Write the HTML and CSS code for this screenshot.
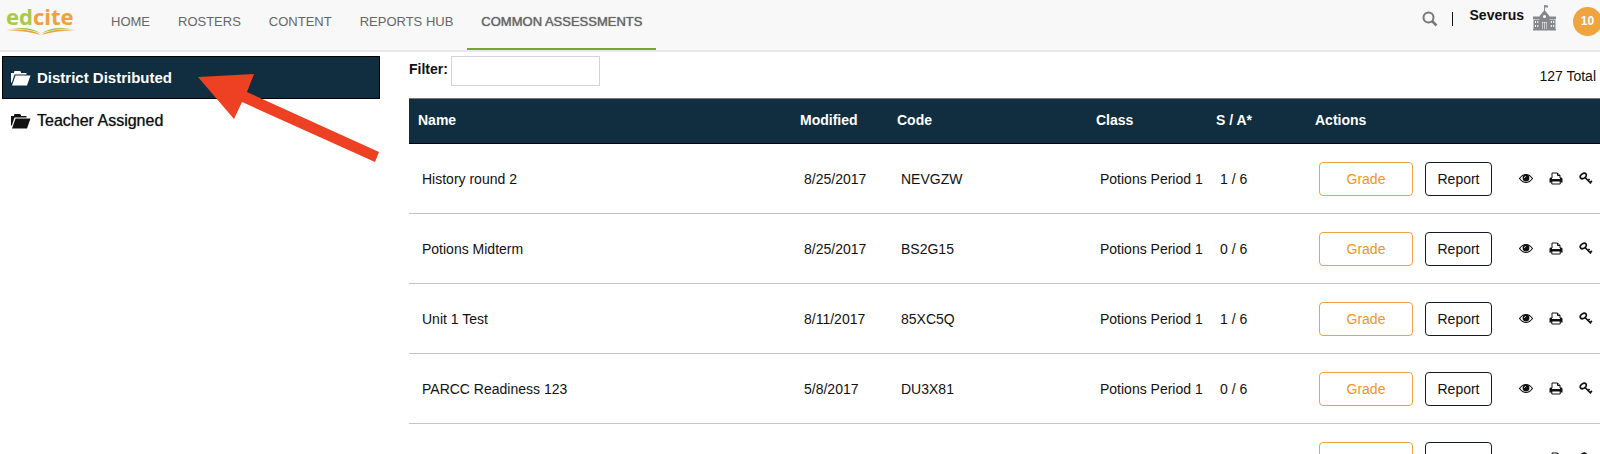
FILE: index.html
```html
<!DOCTYPE html>
<html lang="en">
<head>
  <meta charset="UTF-8">
  <meta name="viewport" content="width=device-width, initial-scale=1">
  <title>Edcite - Common Assessments</title>
  <link rel="stylesheet" href="styles.css">
</head>

<body>
  <!-- shared icons -->
  <svg class="sprite" aria-hidden="true">
    <symbol id="folder" viewBox="0 0 20 16">
      <path d="M0 13V3h3V1.600L4 1h5l1 1v1h5.500v1.500H3.500L1 12z"/>
      <path d="M4.500 5.500h15L16 15.500H1z"/>
    </symbol>
    <symbol id="eye" viewBox="0 0 14 10">
      <path d="M.5 5Q3.500 1 7 1t6.500 4Q10.500 9 7 9T.5 5z" fill="none" stroke="currentColor" stroke-width="1.200"/>
      <circle cx="7" cy="4.500" r="3.400"/>
      <path d="M5.300 4.500Q5.400 2.900 7 2.800" fill="none" stroke="#fff" stroke-width="0.700"/>
    </symbol>
    <symbol id="print" viewBox="0 0 14 13">
      <path d="M3 6V1h5.500L11 3.500V6M8.500 1v2.500H11" fill="none" stroke="currentColor"/>
      <path d="M1.500 5.500H3V7h8V5.500h1.500l1 1V10.500h-13v-4z"/>
      <path d="M2.800 9h8.400v3H2.800z" fill="#fff" stroke="currentColor"/>
    </symbol>
    <symbol id="key" viewBox="0 0 14 13">
      <ellipse cx="4.300" cy="4" rx="3.300" ry="2.300" transform="rotate(-35 4.300 4)" fill="none" stroke="currentColor" stroke-width="1.700"/>
      <path d="M6 5.500l6 6M8.800 8.800l1.800-1.800M10.900 10.900l2-2" fill="none" stroke="currentColor" stroke-width="1.700"/>
    </symbol>
  </svg>

  <header class="navbar">
    <a href="#" class="logo">
      <span class="logo-text">ed<span class="logo-cite">cite</span></span>
      <svg class="logo-book" viewBox="0 0 70 8">
        <path d="M6 1.500Q25-1 35 6.500 25 2 6 1.500z" fill="#9cc044"/>
        <path d="M0 3Q24 1 35 8 22 4 0 3z" fill="#f0a03c"/>
        <path d="M64 1.500Q45-1 35 6.500 45 2 64 1.500z" fill="#9cc044"/>
        <path d="M70 3Q46 1 35 8 48 4 70 3z" fill="#f0a03c"/>
      </svg>
    </a>
    <nav class="menu">
      <a href="#">HOME</a>
      <a href="#">ROSTERS</a>
      <a href="#">CONTENT</a>
      <a href="#">REPORTS HUB</a>
      <a href="#" class="active">COMMON ASSESSMENTS</a>
    </nav>
    <div class="user">
      <button class="search" aria-label="Search">
        <svg viewBox="0 0 16 16" width="16" height="16">
          <circle cx="6.500" cy="6.500" r="5" fill="none" stroke="#777" stroke-width="2"/>
          <path d="M10 10l4.500 4.500" stroke="#777" stroke-width="2.500"/>
        </svg>
      </button>
      <span class="divider"></span>
      <span class="username">Severus</span>
      <svg class="school" viewBox="0 0 23 27" width="23" height="27">
        <path d="M11 8V1h1l3 .6v2H12V8z" fill="#8b8e90"/>
        <path d="M6.500 12l5-6 5 6v13h-10zM0 12.500h6.500v2.500H0zM16.500 12.500H23V15h-6.500zM.5 15.500h6V25h-6zM16.500 15.500h6V25h-6zM0 25h23v1.500H0z" fill="#85888a"/>
        <circle cx="11.500" cy="12.500" r="1.500" fill="#fff"/>
        <path d="M2 17h1v2H2zM4.300 17h1v2h-1zM2 21h1v2H2zM4.300 21h1v2h-1zM17.800 17h1v2h-1zM20.200 17h1v2h-1zM17.800 21h1v2h-1zM20.200 21h1v2h-1zM9 18h5v7H9z" fill="#fff"/>
        <path d="M9.500 18.500h1.700V25H9.500zM11.800 18.500h1.700V25h-1.700z" fill="#85888a"/>
      </svg>
      <span class="badge">10</span>
    </div>
  </header>

  <div class="page">
    <aside class="sidebar">
      <a href="#" class="folder selected"><svg><use href="#folder"/></svg>District Distributed</a>
      <a href="#" class="folder"><svg><use href="#folder"/></svg>Teacher Assigned</a>
      <svg class="arrow" viewBox="0 0 182 88">
        <path d="M0 3l56-3-7 18 132 60-4 10L44 28l-8 17z" fill="#ee4023"/>
      </svg>
    </aside>

    <main class="content">
      <div class="toolbar">
        <label for="filter">Filter:</label>
        <input type="text" id="filter">
        <span class="total">127 Total</span>
      </div>

      <table class="assessments">
        <thead>
          <tr>
            <th>Name</th>
            <th class="col-modified">Modified</th>
            <th class="col-code">Code</th>
            <th class="col-class">Class</th>
            <th class="col-sa">S / A*</th>
            <th class="col-actions">Actions</th>
          </tr>
        </thead>
        <tbody>
          <tr>
            <td>History round 2</td>
            <td>8/25/2017</td>
            <td>NEVGZW</td>
            <td>Potions Period 1</td>
            <td>1 / 6</td>
            <td>
              <div class="actions">
                <button class="btn grade">Grade</button>
                <button class="btn report">Report</button>
                <button class="icon" aria-label="View"><svg><use href="#eye"/></svg></button>
                <button class="icon" aria-label="Print"><svg><use href="#print"/></svg></button>
                <button class="icon" aria-label="Answer key"><svg><use href="#key"/></svg></button>
              </div>
            </td>
          </tr>
          <tr>
            <td>Potions Midterm</td>
            <td>8/25/2017</td>
            <td>BS2G15</td>
            <td>Potions Period 1</td>
            <td>0 / 6</td>
            <td>
              <div class="actions">
                <button class="btn grade">Grade</button>
                <button class="btn report">Report</button>
                <button class="icon" aria-label="View"><svg><use href="#eye"/></svg></button>
                <button class="icon" aria-label="Print"><svg><use href="#print"/></svg></button>
                <button class="icon" aria-label="Answer key"><svg><use href="#key"/></svg></button>
              </div>
            </td>
          </tr>
          <tr>
            <td>Unit 1 Test</td>
            <td>8/11/2017</td>
            <td>85XC5Q</td>
            <td>Potions Period 1</td>
            <td>1 / 6</td>
            <td>
              <div class="actions">
                <button class="btn grade">Grade</button>
                <button class="btn report">Report</button>
                <button class="icon" aria-label="View"><svg><use href="#eye"/></svg></button>
                <button class="icon" aria-label="Print"><svg><use href="#print"/></svg></button>
                <button class="icon" aria-label="Answer key"><svg><use href="#key"/></svg></button>
              </div>
            </td>
          </tr>
          <tr>
            <td>PARCC Readiness 123</td>
            <td>5/8/2017</td>
            <td>DU3X81</td>
            <td>Potions Period 1</td>
            <td>0 / 6</td>
            <td>
              <div class="actions">
                <button class="btn grade">Grade</button>
                <button class="btn report">Report</button>
                <button class="icon" aria-label="View"><svg><use href="#eye"/></svg></button>
                <button class="icon" aria-label="Print"><svg><use href="#print"/></svg></button>
                <button class="icon" aria-label="Answer key"><svg><use href="#key"/></svg></button>
              </div>
            </td>
          </tr>
          <tr>
            <td></td>
            <td></td>
            <td></td>
            <td></td>
            <td></td>
            <td>
              <div class="actions">
                <button class="btn grade" aria-label="Grade"></button>
                <button class="btn report" aria-label="Report"></button>
                <button class="icon" aria-label="View"><svg><use href="#eye"/></svg></button>
                <button class="icon" aria-label="Print"><svg><use href="#print"/></svg></button>
                <button class="icon" aria-label="Answer key"><svg><use href="#key"/></svg></button>
              </div>
            </td>
          </tr>
        </tbody>
      </table>
    </main>
  </div>
</body>
</html>
```

FILE: styles.css
```css
* {
  box-sizing: border-box;
}
body {
  margin: 0;
  height: 100vh;
  overflow: hidden;
  font-family: "Liberation Sans", Arial, sans-serif;
  font-size: 14px;
  color: #111;
  background: #fff;
}
a {
  color: inherit;
  text-decoration: none;
}
button {
  font: inherit;
  padding: 0;
  background: none;
  border: none;
  cursor: pointer;
}
svg {
  display: block;
  fill: currentColor;
}
.sprite {
  position: absolute;
  width: 0;
  height: 0;
}

/* top bar */
.navbar {
  display: flex;
  background: #f8f8f8;
  border-bottom: 2px solid #e9e9e9;
  overflow: hidden;
}
.logo {
  width: 97px;
  padding: 5px 0 0 6px;
}
.logo-text {
  display: block;
  font-family: "Open Sans", sans-serif;
  font-size: 22px;
  font-weight: bold;
  line-height: 22px;
  color: #a9c947;
}
.logo-cite {
  color: #f0a03c;
}
.logo-book {
  width: 70px;
  height: 8px;
}
.menu {
  display: flex;
  font-size: 13px;
  line-height: 18px;
  color: #666;
}
.menu a {
  padding: 13px 14px 17px;
  border-bottom: 2px solid transparent;
}
.menu .active {
  border-bottom-color: #7ba42d;
  text-shadow: 0 0 1px #666;
}
.user {
  display: flex;
  align-items: flex-start;
  margin-left: auto;
  margin-right: -2px;
  padding-top: 4px;
}
.search {
  margin-top: 7px;
}
.divider {
  width: 1px;
  height: 14px;
  margin: 8px 17px 0 14px;
  background: #111;
}
.username {
  font-weight: bold;
  line-height: 22px;
}
.school {
  margin: 0 17px 0 9px;
}
.badge {
  width: 29px;
  height: 29px;
  margin-top: 3px;
  border-radius: 50%;
  background: #f0a440;
  color: #fff;
  font-size: 12px;
  font-weight: bold;
  line-height: 28px;
  text-align: center;
}

.page {
  display: flex;
  padding-top: 4px;
}

/* folders */
.sidebar {
  position: relative;
  flex: 0 0 25%;
  padding: 0 20px 0 2px;
}
.folder {
  display: flex;
  align-items: center;
  gap: 6px;
  height: 43px;
  padding: 0 8px;
  border: 1px solid transparent;
  font-size: 16px;
  text-shadow: 0 0 1px #666;
}
.folder svg {
  width: 20px;
  height: 16px;
}
.folder.selected {
  background: #112e40;
  border-color: #000;
  color: #fff;
  font-size: 15px;
  font-weight: bold;
  text-shadow: none;
}
.arrow {
  position: absolute;
  left: 198px;
  top: 18px;
  width: 182px;
  height: 88px;
}

/* assessments list */
.content {
  flex: 1;
  padding-left: 9px;
}
.toolbar {
  display: flex;
  align-items: flex-start;
  gap: 3px;
  height: 42px;
  padding-right: 4px;
}
.toolbar label {
  font-weight: bold;
  line-height: 26px;
}
.toolbar input {
  width: 149px;
  height: 30px;
  padding: 4px 8px;
  border: 1px solid #d4d4d4;
  font: inherit;
}
.total {
  margin-left: auto;
  line-height: 40px;
}
.assessments {
  width: 100%;
  table-layout: fixed;
  border-collapse: separate;
  border-spacing: 0;
}
.assessments th {
  height: 46px;
  padding: 0 0 2px 9px;
  background: #112e40;
  border-top: 1px solid #777;
  border-bottom: 1px solid #02021f;
  color: #fff;
  text-align: left;
}
.assessments td {
  height: 70px;
  padding: 0 0 0 13px;
  border-bottom: 1px solid #c4c4c4;
  white-space: nowrap;
}
.col-modified {
  width: 97px;
}
.col-code {
  width: 199px;
}
.col-class {
  width: 120px;
}
.col-sa {
  width: 99px;
}
.col-actions {
  width: 294px;
}
.actions {
  display: flex;
  align-items: center;
}
.btn {
  height: 34px;
  border-radius: 4px;
  border: 1px solid;
}
.grade {
  width: 94px;
  border-color: #f0a040;
  color: #ef9526;
}
.report {
  width: 67px;
  margin: 0 11px 0 12px;
  border-color: #111d28;
  color: #111;
}
.icon {
  margin-left: 16px;
  color: #111;
}
.icon svg {
  width: 14px;
  height: 13px;
}
```
